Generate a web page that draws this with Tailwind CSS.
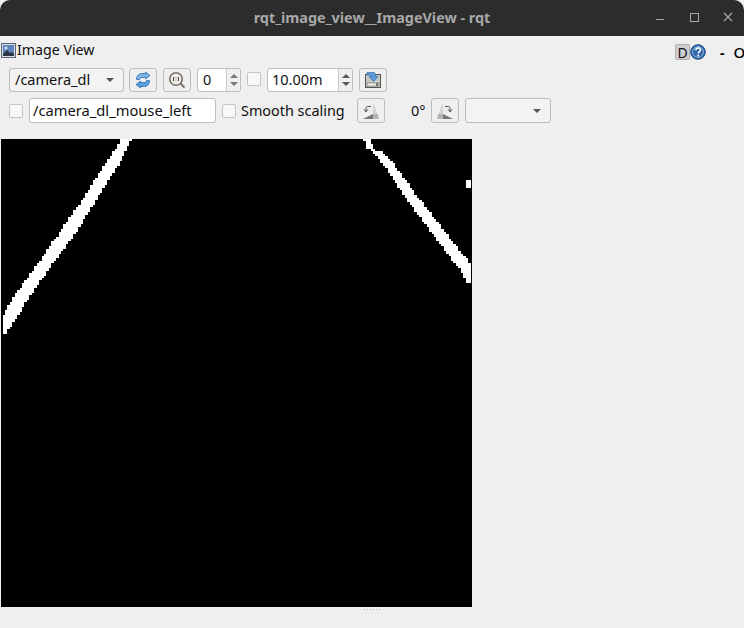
<!DOCTYPE html>
<html lang="en">
<head>
<meta charset="UTF-8">
<title>rqt_image_view__ImageView - rqt</title>
<script src="https://cdn.jsdelivr.net/npm/@tailwindcss/browser@4"></script>
</head>
<body class="bg-[#2c2c2c] overflow-hidden">
<div class="w-[744px] h-[628px] flex flex-col overflow-hidden font-['Noto_Sans',sans-serif] text-[14px] text-[#101010] bg-[#efefef]">

  <!-- title bar -->
  <div class="relative h-[36px] shrink-0 bg-[#2c2c2c] rounded-t-[10px] flex items-center justify-center text-[14.4px] font-bold text-[#a8a8a8]">
    <span>rqt_image_view__ImageView - rqt</span>
    <div class="absolute right-0 top-0 h-[36px] flex items-center">
      <svg width="40" height="36" fill="none" stroke="#a8a8a8"><path d="M24 19.500h8"/></svg>
      <svg width="34" height="36" fill="none" stroke="#a8a8a8"><rect x="18.500" y="13.500" width="8" height="8"/></svg>
      <svg width="38" height="36" fill="none" stroke="#a8a8a8" stroke-width="1.200"><path d="M18 13l8 8M26 13l-8 8"/></svg>
    </div>
  </div>

  <!-- dock title -->
  <div class="h-[28px] shrink-0 flex items-center pl-[1px] relative">
    <svg width="15" height="15" viewBox="0 0 15 15" class="shrink-0">
      <rect x=".5" y=".5" width="14" height="14" fill="#d8dde6" stroke="#5a6472"/>
      <rect x="2" y="2" width="11" height="11" fill="#5c86bd"/>
      <path d="M2 11l4-4 3 3 2-1 2 2v2H2z" fill="#2a3442"/>
      <circle cx="5" cy="5" r="1.500" fill="#dbe5f2"/>
    </svg>
    <span class="ml-[1px] text-[14.200px]">Image View</span>
    <div class="absolute left-[675px] top-[5px] flex items-center">
      <span class="w-[15px] h-[16px] flex items-center justify-center bg-[#cfcfcf] border border-[#b0b0b0] rounded-[2px] text-[14px]">D</span>
      <svg width="16" height="16" viewBox="0 0 16 16">
        <circle cx="8" cy="8" r="7.300" fill="#2f67ad" stroke="#1d4a85"/>
        <circle cx="8" cy="8" r="5.400" fill="none" stroke="#a9c4e6" stroke-width=".8"/>
        <path d="M5.800 6.200c0-3 4.600-3 4.600-.2 0 1.700-2.200 1.700-2.200 3.600" fill="none" stroke="#fff" stroke-width="1.600"/>
        <rect x="7.300" y="10.700" width="1.800" height="1.800" fill="#fff"/>
      </svg>
      <span class="ml-[14px] font-bold text-[14px] text-[#000]">-</span>
      <span class="ml-[9px] text-[15px] font-medium text-[#000]">O</span>
    </div>
  </div>

  <!-- first toolbar -->
  <div class="h-[27px] mt-[2px] shrink-0 flex items-center pl-[9px]">
    <div class="w-[115px] h-[24px] flex items-center justify-between pl-[5px] pr-[9px] bg-[#f3f3f3] border border-[#bdbdbd] rounded-[3px]">
      <span class="text-[14.500px]">/camera_dl</span>
      <span class="w-0 h-0 border-x-[4px] border-x-transparent border-t-[4px] border-t-[#555]"></span>
    </div>
    <button class="ml-[5px] w-[28px] h-[24px] flex items-center justify-center bg-[#efefef] border border-[#bdbdbd] rounded-[3px]">
      <svg width="16" height="18" viewBox="0 0 16 18" fill="none">
        <path d="M1.500 8.500C1.500 4.500 4 2.500 7 2.500h3.500V1L15 4.500 10.500 8V6.500H7c-1.500 0-2.500 1-2.500 2z" fill="#7db4e6" stroke="#2f6fb0" stroke-width=".8"/>
        <path d="M14.500 9.500c0 4-2.500 6-5.500 6H5.500V17L1 13.500 5.500 10v1.500H9c1.500 0 2.500-1 2.500-2z" fill="#5a9ddb" stroke="#2f6fb0" stroke-width=".8"/>
      </svg>
    </button>
    <button class="ml-[6px] w-[28px] h-[24px] flex items-center justify-center bg-[#efefef] border border-[#bdbdbd] rounded-[3px]">
      <svg width="18" height="18" viewBox="0 0 18 18" fill="none">
        <circle cx="8" cy="8" r="6.300" fill="#f0ede6" stroke="#77736b" stroke-width="1.600"/>
        <path d="M12.500 12.500l4 4" stroke="#77736b" stroke-width="2"/>
        <path d="M5.500 6v4M10.500 6v4" stroke="#44423d"/>
        <path d="M8 6.500v.8M8 8.700v.8" stroke="#44423d"/>
      </svg>
    </button>
    <div class="ml-[6px] w-[44px] h-[24px] flex bg-white border border-[#bdbdbd] rounded-[3px] overflow-hidden">
      <span class="flex-1 pl-[5px] leading-[21px] text-[14.500px]">0</span>
      <div class="w-[14px] bg-[#efefef] border-l border-[#c8c8c8] flex flex-col items-center justify-center gap-[4px]">
        <span class="w-0 h-0 border-x-[4px] border-x-transparent border-b-[4px] border-b-[#777]"></span>
        <span class="w-0 h-0 border-x-[4px] border-x-transparent border-t-[4px] border-t-[#777]"></span>
      </div>
    </div>
    <span class="ml-[6px] w-[14px] h-[14px] bg-[#f8f8f8] border border-[#c4c4c4] rounded-[2px] mb-[1px]"></span>
    <div class="ml-[6px] w-[86px] h-[24px] flex bg-white border border-[#bdbdbd] rounded-[3px] overflow-hidden">
      <span class="flex-1 pl-[4px] leading-[21px] text-[14.500px]">10.00m</span>
      <div class="w-[14px] bg-[#efefef] border-l border-[#c8c8c8] flex flex-col items-center justify-center gap-[4px]">
        <span class="w-0 h-0 border-x-[4px] border-x-transparent border-b-[4px] border-b-[#555]"></span>
        <span class="w-0 h-0 border-x-[4px] border-x-transparent border-t-[4px] border-t-[#555]"></span>
      </div>
    </div>
    <button class="ml-[6px] w-[28px] h-[24px] flex items-center justify-center bg-[#efefef] border border-[#bdbdbd] rounded-[3px]">
      <svg width="16" height="16" viewBox="0 0 16 16" fill="none">
        <rect x=".5" y="2.500" width="15" height="13" fill="#c8c8c4" stroke="#55554f"/>
        <rect x="2" y="11" width="12" height="3" fill="#f0f0f0" stroke="#66665f" stroke-width=".6"/>
        <path d="M12 11v3" stroke="#111"/>
        <path d="M2 .5h6.500c1.500 0 2 1 2 2.500v1.500H13L8.500 9.500 4 4.500h2.500V3H2z" fill="#5f9bd6" stroke="#2f6fb0" stroke-width=".7"/>
      </svg>
    </button>
  </div>

  <!-- second toolbar -->
  <div class="h-[25px] mt-[5px] shrink-0 flex items-center pl-[9px]">
    <span class="w-[14px] h-[14px] bg-[#f8f8f8] border border-[#c4c4c4] rounded-[2px]"></span>
    <div class="ml-[6px] w-[187px] h-[25px] pl-[3px] leading-[23px] bg-white border border-[#bdbdbd] rounded-[3px] text-[14.700px]">/camera_dl_mouse_left</div>
    <span class="ml-[6px] w-[14px] h-[14px] bg-[#f8f8f8] border border-[#c4c4c4] rounded-[2px]"></span>
    <span class="ml-[5px] w-[103px] whitespace-nowrap text-[14.400px]">Smooth scaling</span>
    <button class="ml-[13px] w-[28px] h-[25px] flex items-center justify-center bg-[#efefef] border border-[#bdbdbd] rounded-[3px]">
      <svg width="18" height="18" viewBox="0 0 18 18" fill="none">
        <path d="M11 1l5 12h-5z" fill="#d2d2d2"/>
        <path d="M1 17l10-5v5z" fill="#777"/>
        <path d="M11 12h5l1 5h-6z" fill="#b4b4b4"/>
        <path d="M9 4.500H5.500C4.500 4.500 4 5 4 6.500V9M2 7.200L4 10l2-2.800" stroke="#555"/>
      </svg>
    </button>
    <span class="ml-[26px] w-[15px] text-[14.500px] whitespace-nowrap">0°</span>
    <button class="ml-[5px] w-[28px] h-[25px] flex items-center justify-center bg-[#efefef] border border-[#bdbdbd] rounded-[3px]">
      <svg width="18" height="18" viewBox="0 0 18 18" fill="none">
        <path d="M7 1L2 13h5z" fill="#d2d2d2"/>
        <path d="M17 17L7 12v5z" fill="#777"/>
        <path d="M7 12H2l-1 5h6z" fill="#b4b4b4"/>
        <path d="M9 4.500h3.500c1 0 1.500.5 1.500 2V9M12 7.200L14 10l2-2.800" stroke="#555"/>
      </svg>
    </button>
    <div class="ml-[6px] w-[86px] h-[25px] flex items-center justify-end pr-[9px] bg-[#f3f3f3] border border-[#bdbdbd] rounded-[3px]">
      <span class="w-0 h-0 border-x-[4px] border-x-transparent border-t-[4px] border-t-[#555]"></span>
    </div>
  </div>

  <!-- image -->
  <svg id="image" class="ml-[1px] mt-[16px] shrink-0 block w-[471px] h-[468px] bg-black" viewBox="0 0 192 192" shape-rendering="crispEdges" fill="#fff"></svg>

  <!-- dock splitter grip -->
  <div class="mt-[2px] flex justify-center gap-[2px]">
    <span class="w-[1px] h-[1px] bg-[#b8b8b8]"></span><span class="w-[1px] h-[1px] bg-[#b8b8b8]"></span>
    <span class="w-[1px] h-[1px] bg-[#b8b8b8]"></span><span class="w-[1px] h-[1px] bg-[#b8b8b8]"></span>
    <span class="w-[1px] h-[1px] bg-[#b8b8b8]"></span><span class="w-[1px] h-[1px] bg-[#b8b8b8]"></span>
  </div>
</div>

<script>
// line edges in screen pixels: [y, xLeft, xRight]
const leftLine = [[139,120,131],[150,114,125],[163,105,119],[197,83,97],[230,60,77],[263,37,52],[297,12,28],[317,1,16],[328,1,8],[333,1,5]];
const rightLine = [[139,364,371],[149,368,374],[151,373,381],[163,383,394],[197,406,419],[230,431,445],[263,456,471],[272,463,472],[283,468,472]];
const svg = document.getElementById('image');

function addRect(col, row, w, h) {
    const r = document.createElementNS('http://www.w3.org/2000/svg', 'rect');
    r.setAttribute('x', col);
    r.setAttribute('y', row);
    r.setAttribute('width', w);
    r.setAttribute('height', h);
    svg.appendChild(r);
}

function drawLine(points) {
    const cw = 471 / 192, ch = 468 / 192;
    for (let row = 0; row < 192; row++) {
        const y = 139 + (row + 0.5) * ch;
        for (let i = 0; i < points.length - 1; i++) {
            const a = points[i], b = points[i + 1];
            if (y >= a[0] && y < b[0]) {
                const t = (y - a[0]) / (b[0] - a[0]);
                const c1 = Math.round((a[1] + (b[1] - a[1]) * t - 1) / cw);
                const c2 = Math.round((a[2] + (b[2] - a[2]) * t - 1) / cw);
                addRect(c1, row, Math.max(c2 - c1, 1), 1);
            }
        }
    }
}

drawLine(leftLine);
drawLine(rightLine);
addRect(190, 17, 2, 3); // stray blob on the right edge
</script>
</body>
</html>
